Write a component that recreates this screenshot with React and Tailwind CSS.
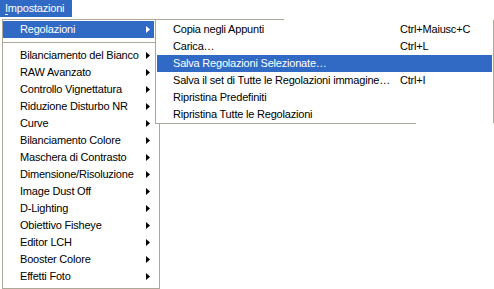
import { memo } from 'react';

const mainItems = [
  'Bilanciamento del Bianco',
  'RAW Avanzato',
  'Controllo Vignettatura',
  'Riduzione Disturbo NR',
  'Curve',
  'Bilanciamento Colore',
  'Maschera di Contrasto',
  'Dimensione/Risoluzione',
  'Image Dust Off',
  'D-Lighting',
  'Obiettivo Fisheye',
  'Editor LCH',
  'Booster Colore',
  'Effetti Foto',
];

const subItems = [
  { label: 'Copia negli Appunti', key: 'Ctrl+Maiusc+C' },
  { label: 'Carica…', key: 'Ctrl+L' },
  { label: 'Salva Regolazioni Selezionate…', key: '', active: true },
  { label: 'Salva il set di Tutte le Regolazioni immagine…', key: 'Ctrl+I' },
  { label: 'Ripristina Predefiniti', key: '' },
  { label: 'Ripristina Tutte le Regolazioni', key: '' },
];

// small right-pointing submenu triangle
const Arrow = memo(({ white }) => (
  <svg width="4" height="7" viewBox="0 0 4 7" className={white ? 'fill-white' : 'fill-black'}>
    <path d="M0 0 L4 3.5 L0 7 Z" />
  </svg>
));
Arrow.displayName = 'Arrow';

const MenuRow = ({ label, active }) => (
  <div className={`h-[17px] mr-[5px] pl-[17px] pr-[4px] flex items-center justify-between ${active ? 'bg-[#316ac5] text-white' : 'text-black'}`}>
    <span>{label}</span>
    <Arrow white={active} />
  </div>
);

export default function App() {
  return (
    <div className="relative w-[494px] h-[289px] bg-white overflow-hidden text-[11px] tracking-[-0.2px] leading-none font-['Liberation_Sans',Arial,sans-serif]">
      {/* menu bar */}
      <div className="h-[19px]">
        <div className="w-[72px] h-[17px] bg-[#316ac5] text-white pl-[5px] flex items-center">
          <span><span className="underline underline-offset-2">I</span>mpostazioni</span>
        </div>
      </div>

      {/* main dropdown */}
      <div className="ml-[2px] w-[158px] border border-[#aca899] bg-white pt-[1px] pb-[3px]">
        <MenuRow label="Regolazioni" active />
        <div className="h-[9px] mr-[4px] flex items-center">
          <div className="h-px w-full bg-[#aca899]" />
        </div>
        {mainItems.map((it) => (
          <MenuRow key={it} label={it} />
        ))}
      </div>

      {/* flyout submenu */}
      <div className="absolute left-[155px] top-[19px] w-[339px] bg-white">
        <div className="h-px w-[129px] bg-[#aca899]" />
        <div className="border-l border-r border-[#aca899] px-[1px] pt-[1px]">
          {subItems.map((it) => (
            <div
              key={it.label}
              className={`h-[17px] pl-[16px] grid grid-cols-[227px_1fr] items-center ${it.active ? 'bg-[#316ac5] text-white' : 'text-black'}`}
            >
              <span className="whitespace-nowrap">{it.label}</span>
              <span className="whitespace-nowrap">{it.key}</span>
            </div>
          ))}
        </div>
        <div className="h-px w-[261px] bg-[#aca899]" />
      </div>
    </div>
  );
}
